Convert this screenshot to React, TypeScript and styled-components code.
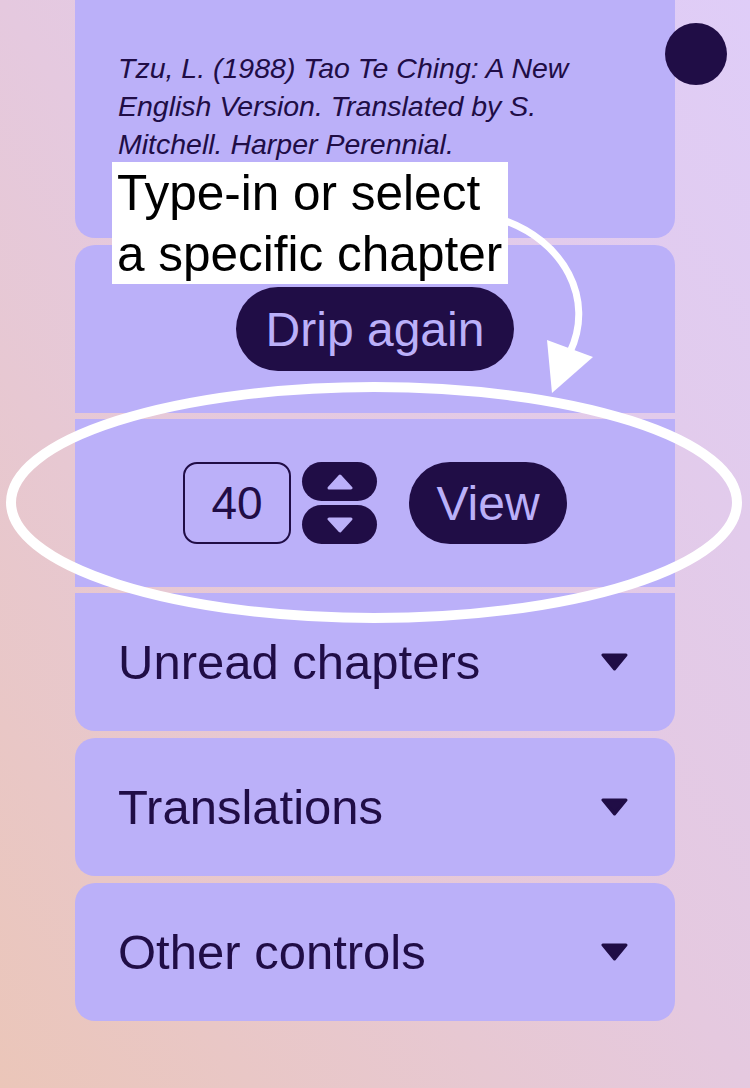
import React from "react";
import styled, { createGlobalStyle } from "styled-components";

const DARK = "#200d46";
const CARD = "#bbb0f9";

const GlobalStyle = createGlobalStyle`
  html, body { margin: 0; padding: 0; }
  body {
    font-family: "Liberation Sans", Arial, sans-serif;
    background: #e5cae2;
  }
  * { box-sizing: border-box; }
`;

const Page = styled.div`
  position: relative;
  width: 750px;
  height: 1088px;
  overflow: hidden;
  padding-left: 75px;
  background: linear-gradient(to top right, #ebc6b9 0%, #e5c9df 50%, #dfcdf8 100%);
`;

const Column = styled.div`
  width: 600px;
  display: flex;
  flex-direction: column;
  gap: 7px;
`;

const Group = styled.div`
  display: flex;
  flex-direction: column;
  gap: 6px;
`;

const Card = styled.section<{ $top?: boolean; $bottom?: boolean; $h: number }>`
  background: ${CARD};
  height: ${(p) => p.$h}px;
  border-radius: ${(p) => (p.$top ? "20px 20px" : "0 0")} ${(p) => (p.$bottom ? "20px 20px" : "0 0")};
  display: flex;
  align-items: center;
`;

const CitationCard = styled.section`
  background: ${CARD};
  height: 238px;
  border-radius: 0 0 20px 20px;
  padding: 49px 43px 0 43px;
`;

const Citation = styled.p`
  margin: 0;
  font-style: italic;
  font-size: 28.5px;
  line-height: 38px;
  color: ${DARK};
`;

const Centered = styled.div`
  flex: 1;
  display: flex;
  justify-content: center;
  align-items: center;
`;

const PillButton = styled.button<{ $w: number }>`
  width: ${(p) => p.$w}px;
  height: 84px;
  border: none;
  border-radius: 42px;
  background: ${DARK};
  color: ${CARD};
  font-family: "Liberation Sans", Arial, sans-serif;
  font-size: 48px;
  padding: 0;
  display: flex;
  align-items: center;
  justify-content: center;
`;

const ChapterRow = styled.div`
  flex: 1;
  display: flex;
  justify-content: center;
  align-items: center;
`;

const ChapterInput = styled.input`
  width: 108px;
  height: 82px;
  border: 2px solid ${DARK};
  border-radius: 14px;
  background: transparent;
  color: ${DARK};
  font-family: "Liberation Sans", Arial, sans-serif;
  font-size: 46px;
  text-align: center;
  padding: 0;
  outline: none;
`;

const Stepper = styled.div`
  display: flex;
  flex-direction: column;
  gap: 4px;
  margin-left: 11px;
  margin-right: 32px;
`;

const StepButton = styled.button`
  width: 75px;
  height: 39px;
  border: none;
  border-radius: 20px;
  background: ${DARK};
  padding: 0;
  display: flex;
  align-items: center;
  justify-content: center;
`;

const ViewButton = styled(PillButton)`
  height: 82px;
  border-radius: 41px;
`;

const AccordionHeader = styled.div`
  flex: 1;
  display: flex;
  align-items: center;
  justify-content: space-between;
  padding: 0 47px 0 43px;
  font-size: 49px;
  color: ${DARK};
`;

const Annotation = styled.div`
  position: absolute;
  left: 112px;
  top: 162px;
  background: #ffffff;
  color: #000000;
  font-size: 49.5px;
  line-height: 61px;
  padding: 0 6px 0 5px;
  white-space: nowrap;
`;

const Marks = styled.svg`
  position: absolute;
  left: 0;
  top: 0;
  pointer-events: none;
`;

const Dot = styled.div`
  position: absolute;
  left: 665px;
  top: 23px;
  width: 62px;
  height: 62px;
  border-radius: 50%;
  background: ${DARK};
`;

const Triangle = ({ dir, color, w, h }: { dir: "up" | "down"; color: string; w: number; h: number }) => {
  const pts =
    dir === "up"
      ? `2,${h - 2} ${w / 2},2 ${w - 2},${h - 2}`
      : `2,2 ${w - 2},2 ${w / 2},${h - 2}`;
  return (
    <svg width={w} height={h} viewBox={`0 0 ${w} ${h}`}>
      <polygon points={pts} fill={color} stroke={color} strokeWidth={3} strokeLinejoin="round" />
    </svg>
  );
};

const Accordion = ({ label, top, bottom }: { label: string; top?: boolean; bottom?: boolean }) => (
  <Card $h={138} $top={top} $bottom={bottom}>
    <AccordionHeader>
      <span>{label}</span>
      <Triangle dir="down" color={DARK} w={27} h={18} />
    </AccordionHeader>
  </Card>
);

export default function App() {
  return (
    <>
      <GlobalStyle />
      <Page>
        <Column>
          <CitationCard>
            <Citation>
              Tzu, L. (1988) Tao Te Ching: A New English Version. Translated by S. Mitchell. Harper Perennial.
            </Citation>
          </CitationCard>
          <Group>
            <Card $h={168} $top>
              <Centered>
                <PillButton $w={278}>Drip again</PillButton>
              </Centered>
            </Card>
            <Card $h={168}>
              <ChapterRow>
                <ChapterInput type="text" value="40" readOnly />
                <Stepper>
                  <StepButton aria-label="Next chapter">
                    <Triangle dir="up" color={CARD} w={26} h={16} />
                  </StepButton>
                  <StepButton aria-label="Previous chapter">
                    <Triangle dir="down" color={CARD} w={26} h={16} />
                  </StepButton>
                </Stepper>
                <ViewButton $w={158}>View</ViewButton>
              </ChapterRow>
            </Card>
            <Accordion label="Unread chapters" bottom />
          </Group>
          <Accordion label="Translations" top bottom />
          <Accordion label="Other controls" top bottom />
        </Column>
        <Dot />
        <Annotation>
          Type-in or select
          <br />
          a specific chapter
        </Annotation>
        <Marks width={750} height={1088} viewBox="0 0 750 1088">
          <ellipse cx={374} cy={502.5} rx={363} ry={115.5} fill="none" stroke="#ffffff" strokeWidth={10} />
          <path d="M 500 219 C 565 240, 595 300, 570 352" fill="none" stroke="#ffffff" strokeWidth={7} />
          <polygon points="547,340 593,357 552,393" fill="#ffffff" />
        </Marks>
      </Page>
    </>
  );
}
